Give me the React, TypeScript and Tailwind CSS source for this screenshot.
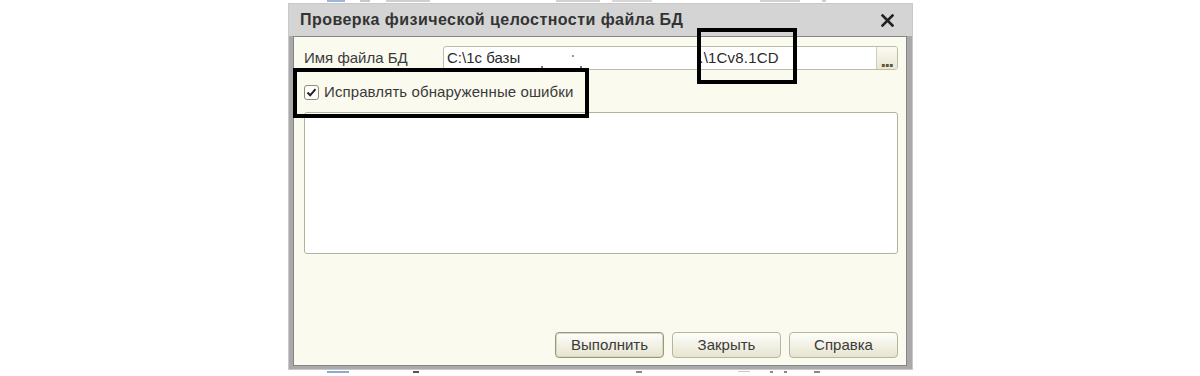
import React from "react";

const frag = (l: number, t: number, w: number, h: number, c: string) => (
  <div key={`${l}-${t}`} className="absolute" style={{ left: l, top: t, width: w, height: h, background: c }} />
);

function Btn({ label, primary }: { label: string; primary?: boolean }) {
  return (
    <div
      className={
        "w-[109px] h-[26px] flex items-center justify-center rounded-[4px] bg-gradient-to-b from-[#fefefc] to-[#e6e4cf] text-[15px] text-[#3a3a3a] " +
        (primary
          ? "border border-[#9a987c] shadow-[inset_0_0_0_1px_#d9d7bf]"
          : "border border-[#b6b59e]")
      }
    >
      {label}
    </div>
  );
}

export default function App() {
  return (
    <div className="relative w-[1200px] h-[376px] bg-white overflow-hidden font-['Liberation_Sans',Arial,sans-serif]">
      {/* fragments of underlying page */}
      {frag(327, 0, 18, 2, "#9fb4dc")}
      {frag(360, 0, 10, 2, "#c8c8c8")}
      {frag(386, 0, 44, 2, "#cfcfcf")}
      {frag(556, 0, 44, 2, "#d2d2d2")}
      {frag(612, 0, 40, 2, "#d6d6d6")}
      {frag(760, 0, 40, 2, "#d2d2d2")}
      {frag(822, 0, 4, 2, "#cfcfcf")}
      {frag(327, 371, 22, 2, "#8ea8d8")}
      {frag(413, 371, 6, 2, "#555")}
      {frag(636, 371, 6, 2, "#888")}
      {frag(738, 371, 12, 1, "#c8c8c8")}
      {frag(770, 371, 3, 2, "#888")}
      {frag(784, 371, 3, 2, "#888")}
      {frag(814, 371, 6, 2, "#888")}

      <div className="pt-[3px] pl-[288px]">
        <div className="w-[625px] h-[367px] border border-[#c9c9c9] bg-[#a9a9a9] flex flex-col">
          {/* title bar */}
          <div className="h-[32px] bg-[#d4d4d4] flex items-center justify-between pl-[11px] pr-[18px]">
            <span className="text-[16px] font-bold text-[#333] tracking-[0.45px]">
              Проверка физической целостности файла БД
            </span>
            <svg width="13" height="13" viewBox="0 0 13 13">
              <path d="M1.5 1.5 L11.5 11.5 M11.5 1.5 L1.5 11.5" stroke="#222" strokeWidth="2.6" strokeLinecap="square" />
            </svg>
          </div>
          {/* body */}
          <div className="flex-1 pl-[4px] pr-[5px] pb-[3px] flex">
            <div className="flex-1 border border-[#858585] bg-[#fbfaee] flex flex-col pl-[10px] pr-[8px] pt-[9px] pb-[7px] text-[#3a3a3a]">
              {/* row 1 */}
              <div className="flex items-center h-[24px]">
                <div className="w-[139px] text-[15px]">Имя файла БД</div>
                <div className="flex-1 h-[24px] flex border border-[#bdbca6] rounded-[3px] bg-white overflow-hidden">
                  <div className="flex-1 flex items-center pl-[3px] text-[15px] text-[#2a2a2a] relative">
                    <span>C:\1с базы</span>
                    <span className="absolute left-[97px] top-[19px] w-[2px] h-[2px] bg-[#777]" />
                    <span className="absolute left-[128px] top-[8px] w-[2px] h-[2px] bg-[#999]" />
                    <span className="absolute left-[136px] top-[19px] w-[2px] h-[2px] bg-[#777]" />
                    <span className="ml-[179px] tracking-[0.2px]">.\1Cv8.1CD</span>
                  </div>
                  <div className="w-[21px] border-l border-[#cfcdb6] bg-gradient-to-b from-[#fbfaf2] to-[#e9e7d2] flex items-end justify-center pb-[5px]">
                    <span className="text-[20px] font-bold leading-[8px] text-[#5a5840] tracking-[-1.5px] pr-[1px]">...</span>
                  </div>
                </div>
              </div>
              {/* checkbox row */}
              <div className="flex items-center mt-[14px] h-[16px]">
                <div className="w-[15px] h-[15px] rounded-[3px] border border-[#8d8c78] bg-white flex items-center justify-center">
                  <svg width="11" height="11" viewBox="0 0 11 11">
                    <path d="M1.5 5.5 L4.2 8.3 L9.5 2.2" stroke="#222" strokeWidth="2" fill="none" />
                  </svg>
                </div>
                <span className="ml-[5px] text-[15px] tracking-[0.1px]">Исправлять обнаруженные ошибки</span>
              </div>
              {/* textarea */}
              <div className="mt-[12px] h-[142px] border border-[#b3b29c] rounded-[3px] bg-white" />
              <div className="flex-1" />
              {/* buttons */}
              <div className="flex justify-end gap-[8px]">
                <Btn label="Выполнить" primary />
                <Btn label="Закрыть" />
                <Btn label="Справка" />
              </div>
            </div>
          </div>
        </div>
      </div>

      {/* annotation rectangles */}
      <div className="absolute left-[697px] top-[28px] w-[100px] h-[56px] border-[4px] border-black" />
      <div className="absolute left-[293px] top-[68px] w-[296px] h-[50px] border-[4px] border-black" />
    </div>
  );
}
